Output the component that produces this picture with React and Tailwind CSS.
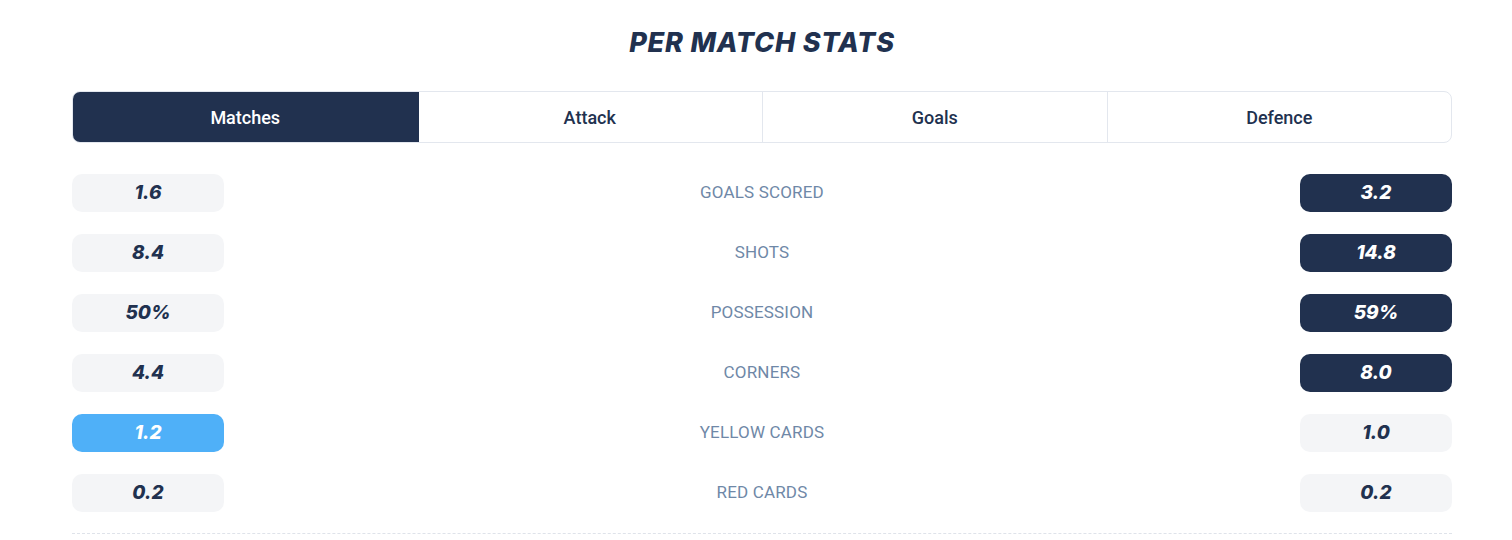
const tabs = ['Matches', 'Attack', 'Goals', 'Defence']

const rows = [
  { label: 'GOALS SCORED', home: '1.6', away: '3.2', win: 'away' },
  { label: 'SHOTS', home: '8.4', away: '14.8', win: 'away' },
  { label: 'POSSESSION', home: '50%', away: '59%', win: 'away' },
  { label: 'CORNERS', home: '4.4', away: '8.0', win: 'away' },
  { label: 'YELLOW CARDS', home: '1.2', away: '1.0', win: 'homeBlue' },
  { label: 'RED CARDS', home: '0.2', away: '0.2', win: null },
]

const Pill = ({ value, tone }) => {
  const cls =
    tone === 'dark'
      ? 'bg-[#21314f] text-white'
      : tone === 'blue'
        ? 'bg-[#4fb0f8] text-white'
        : 'bg-[#f4f5f7] text-[#21314f]'
  return (
    <div
      className={`w-[152px] h-[38px] rounded-[10px] flex items-center justify-center font-['Inter',sans-serif] italic font-extrabold text-[19px] ${cls}`}
    >
      {value}
    </div>
  )
}

export default function App() {
  return (
    <div className="min-h-screen bg-white pl-[72px] pr-[60px] font-['Roboto',sans-serif]">
      <h2 className="h-[91px] pt-[27px] text-center font-['Inter',sans-serif] italic font-extrabold text-[27px] leading-[32px] text-[#21314f] tracking-[0.03em]">
        PER MATCH STATS
      </h2>
      <div className="grid grid-cols-4 h-[52px] rounded-[8px] border border-[#e3e7ee] overflow-hidden">
        {tabs.map((t, i) => (
          <div
            key={t}
            className={`flex items-center justify-center text-[18px] font-medium ${
              i === 0 ? 'bg-[#21314f] text-white -m-px' : 'text-[#21314f]'
            } ${i > 1 ? 'border-l border-[#e3e7ee]' : ''}`}
          >
            {t}
          </div>
        ))}
      </div>
      <div className="flex flex-col gap-[22px] pt-[31px] pb-[21px] border-b border-dashed border-[#dfe3ea]">
        {rows.map((r) => (
          <div key={r.label} className="flex items-center justify-between">
            <Pill value={r.home} tone={r.win === 'homeBlue' ? 'blue' : 'light'} />
            <span className="text-[17px] tracking-[0.01em] text-[#6f88a7]">{r.label}</span>
            <Pill value={r.away} tone={r.win === 'away' ? 'dark' : 'light'} />
          </div>
        ))}
      </div>
    </div>
  )
}
